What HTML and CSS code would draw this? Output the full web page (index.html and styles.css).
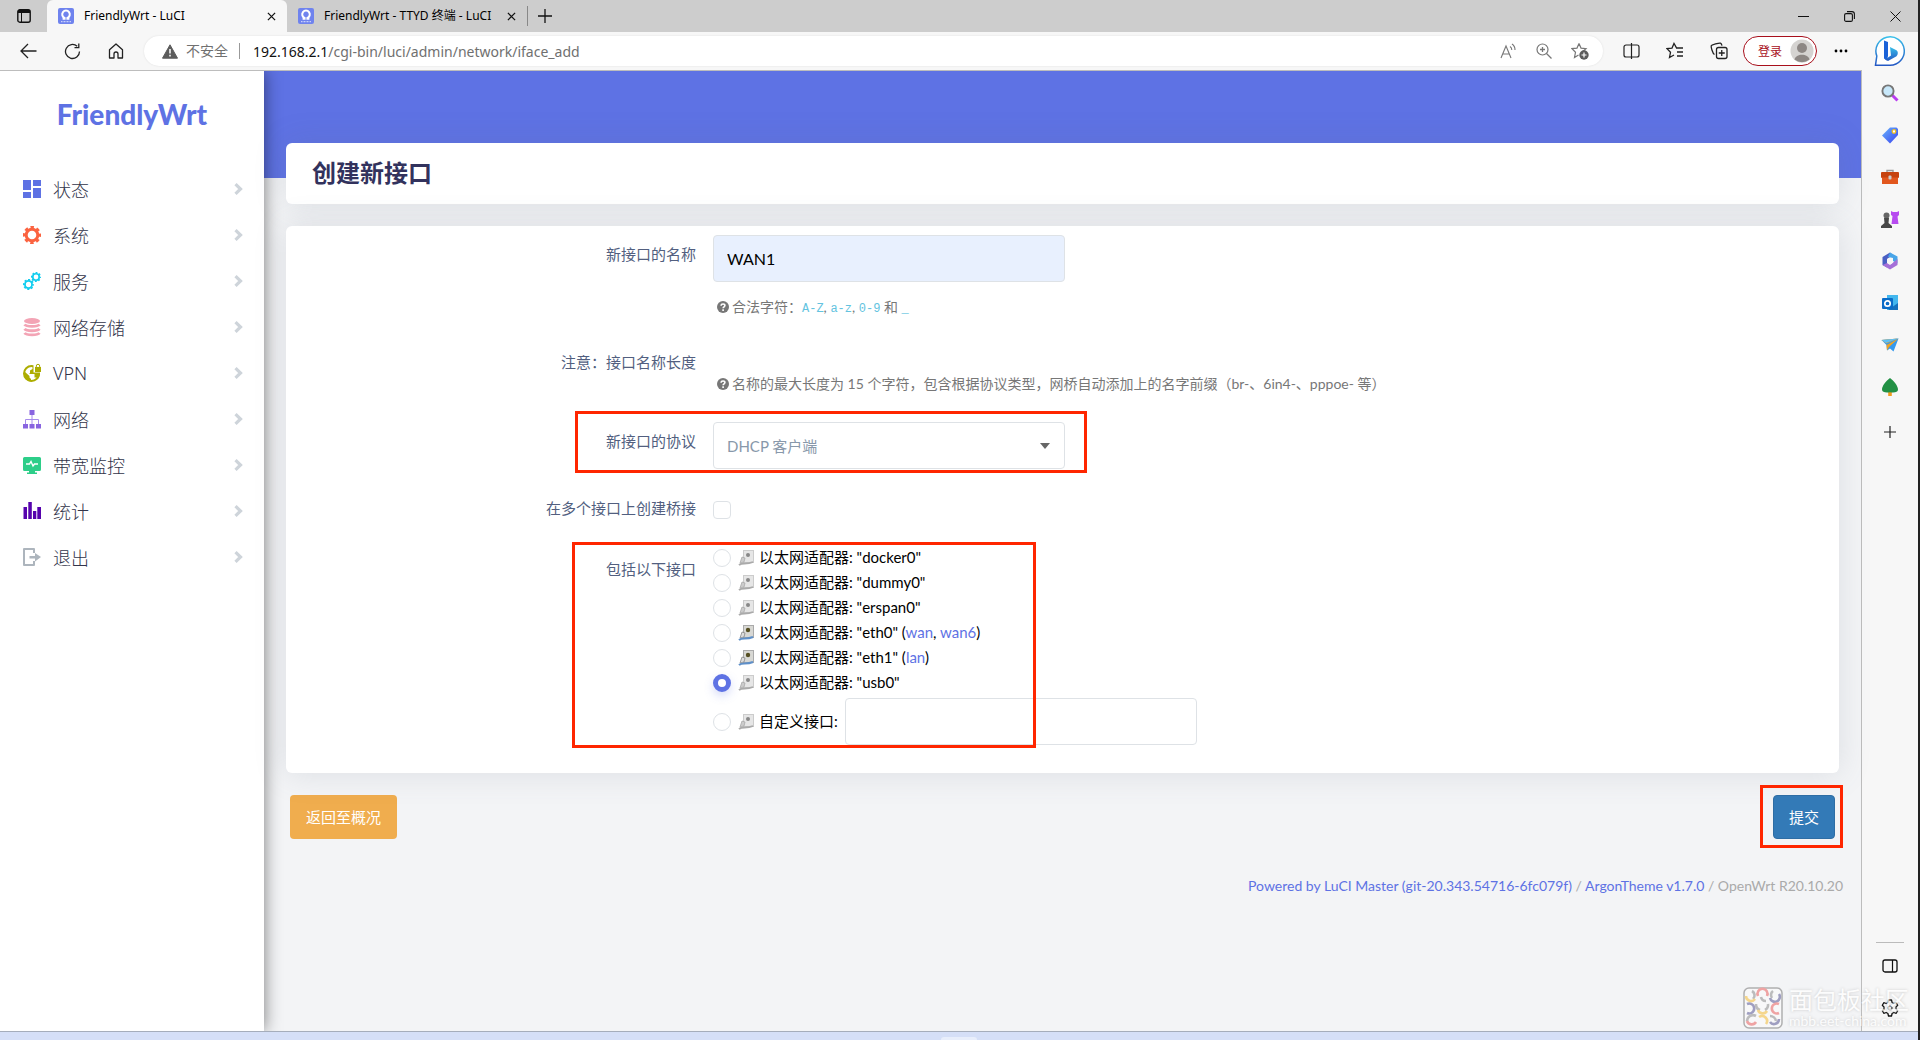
FILE: index.html
```html
<!DOCTYPE html>
<html lang="zh-CN">
<head>
<meta charset="utf-8">
<meta name="viewport" content="width=device-width, initial-scale=1">
<title>FriendlyWrt - LuCI</title>
<link rel="stylesheet" href="styles.css">
</head>
<body>
<svg class="defs" aria-hidden="true">
  <symbol id="fav" viewBox="0 0 16 16"><rect width="16" height="16" rx="2" fill="#6f83ee"/><path d="M4.600 10.800h2V9.900A3.800 3.800 0 1 1 9.400 9.900v.9h2" fill="none" stroke="#fff" stroke-width="2"/><path d="M3 13.600h10" stroke="#c9d0fa" stroke-width="1.400" stroke-dasharray="1 .5"/></symbol>
  <symbol id="x" viewBox="0 0 10 10"><path d="M1 1l8 8M9 1L1 9" stroke="#111" stroke-width="1.400"/></symbol>
  <symbol id="chev" viewBox="0 0 9 12"><path d="M1.500 1.200L6.500 6l-5 4.800" fill="none" stroke="#ced4da" stroke-width="3.200"/></symbol>
  <symbol id="gear" viewBox="0 0 18 18"><circle cx="9" cy="9" r="5.800" fill="none" stroke="currentColor" stroke-width="3"/><circle cx="9" cy="9" r="7.800" fill="none" stroke="currentColor" stroke-width="2.600" stroke-dasharray="3.400 2.720" stroke-dashoffset="1.700"/></symbol>
  <symbol id="help" viewBox="0 0 12 12"><circle cx="6" cy="6" r="6" fill="#777"/><path d="M4.100 4.700C4.200 2.400 7.900 2.500 7.900 4.600 7.900 5.900 6.100 5.900 6.100 7.300M6.100 8.300v1.600" fill="none" stroke="#fff" stroke-width="1.600"/></symbol>
  <symbol id="nic-off" viewBox="0 0 16 16"><rect x="5.500" y=".5" width="10" height="12" fill="#e6e6e6" stroke="#ccc"/><circle cx="10" cy="5" r="2" fill="#888"/><path d="M4 7l3 1-1 4-4 1z" fill="#ccc" stroke="#aaa" stroke-width=".8"/><path d="M1 15c3-3 7 0 14-3" fill="none" stroke="#aaa" stroke-width="1.800"/></symbol>
  <symbol id="nic-on" viewBox="0 0 16 16"><rect x="5.500" y=".5" width="10" height="12" fill="#d8d8d4" stroke="#aaa"/><circle cx="10" cy="5" r="2.200" fill="#554f22"/><path d="M4 7l3 1-1 4-4 1z" fill="#ddd" stroke="#888" stroke-width=".8"/><path d="M1 15c3-3 7 0 14-3" fill="none" stroke="#5e8fc8" stroke-width="2"/></symbol>
</svg>
<div class="window">
  <header class="tabstrip">
    <button class="tabmenu" aria-label="标签菜单"><svg width="14" height="14" viewBox="0 0 14 14"><rect x=".8" y=".8" width="12.400" height="12.400" rx="2" fill="none" stroke="#111" stroke-width="1.400"/><path d="M1 2.500h12" stroke="#111" stroke-width="3"/><path d="M4.500 4v9" stroke="#111"/></svg></button>
    <div class="tab tab-active"><svg width="16" height="16"><use href="#fav"/></svg><span class="tab-title">FriendlyWrt - LuCI</span><button aria-label="关闭"><svg width="9" height="9"><use href="#x"/></svg></button></div>
    <div class="tab"><svg width="16" height="16"><use href="#fav"/></svg><span class="tab-title">FriendlyWrt - TTYD 终端 - LuCI</span><button aria-label="关闭"><svg width="9" height="9"><use href="#x"/></svg></button></div>
    <button class="newtab" aria-label="新建标签"><svg width="14" height="14" viewBox="0 0 14 14"><path d="M7 0v14M0 7h14" stroke="#111" stroke-width="1.300"/></svg></button>
    <div class="winbtns">
      <button aria-label="最小化"><svg width="11" height="11" viewBox="0 0 11 11"><path d="M0 5.500h11" stroke="#111"/></svg></button>
      <button aria-label="还原"><svg width="11" height="11" viewBox="0 0 11 11"><rect x=".6" y="2.600" width="7.800" height="7.800" rx="1.500" fill="none" stroke="#111" stroke-width="1.100"/><path d="M3 .6h5a2.400 2.400 0 0 1 2.400 2.400v5" fill="none" stroke="#111" stroke-width="1.100"/></svg></button>
      <button aria-label="关闭"><svg width="11" height="11" viewBox="0 0 11 11"><path d="M.5.5l10 10M10.500.5l-10 10" stroke="#111"/></svg></button>
    </div>
  </header>

  <div class="frame">
    <div class="left">
      <div class="toolbar">
        <div class="nav">
          <button aria-label="返回"><svg width="17" height="16" viewBox="0 0 17 16"><path d="M16.500 8H1M8 1L1 8l7 7" fill="none" stroke="#222" stroke-width="1.300"/></svg></button>
          <button aria-label="刷新"><svg width="17" height="17" viewBox="0 0 17 17"><path d="M15.500 8.500a7 7 0 1 1-2.300-5.200M10.500 4.700h4.300V.5" fill="none" stroke="#222" stroke-width="1.300"/></svg></button>
          <button aria-label="主页"><svg width="16" height="16" viewBox="0 0 16 16"><path d="M1.500 6.800L8 1l6.500 5.800V15H10v-4a2 2 0 0 0-4 0v4H1.500z" fill="none" stroke="#222" stroke-width="1.300" stroke-linejoin="round"/></svg></button>
        </div>
        <div class="address">
          <svg width="16" height="15" viewBox="0 0 16 15"><path d="M8 .8L15.500 14.200H.5z" fill="#5c5c5c" stroke="#5c5c5c" stroke-linejoin="round"/><path d="M8 5v4.500M8 10.800v1.700" stroke="#fff" stroke-width="1.500"/></svg>
          <span class="insecure">不安全</span>
          <span class="url"><b>192.168.2.1</b>/cgi-bin/luci/admin/network/iface_add</span>
          <div class="addr-icons">
            <button aria-label="朗读"><svg width="16" height="16" viewBox="0 0 16 16"><path d="M1 15L6 3l5 12M3 11h6M10 3.500a4 4 0 0 1 1.800 3.500M12 1a7 7 0 0 1 3 6" fill="none" stroke="#777" stroke-width="1.100"/></svg></button>
            <button aria-label="缩放"><svg width="16" height="16" viewBox="0 0 16 16"><circle cx="6.500" cy="6.500" r="5.500" fill="none" stroke="#777" stroke-width="1.200"/><path d="M10.500 10.500l5 5M4 6.500h5M6.500 4v5" stroke="#777" stroke-width="1.300"/></svg></button>
            <button aria-label="收藏"><svg width="18" height="18" viewBox="0 0 18 18"><path d="M8 1.500l2 4.600 5 .5-3.800 3.400M7.500 13L3.500 15.500l1-5.200L1 6.600l5-.5L8 1.500" fill="none" stroke="#777" stroke-width="1.200"/><circle cx="13" cy="13" r="4.700" fill="#5c5c5c"/><path d="M13 10.500v5M10.500 13h5" stroke="#fff" stroke-width="1.200"/></svg></button>
          </div>
        </div>
        <div class="actions">
          <button aria-label="分屏"><svg width="17" height="16" viewBox="0 0 17 16"><path d="M6.500 2H3a2 2 0 0 0-2 2v8a2 2 0 0 0 2 2h3.500M10.500 2H14a2 2 0 0 1 2 2v8a2 2 0 0 1-2 2h-3.500M6.500 2h4M6.500 14h4M8.500 0v16" fill="none" stroke="#222" stroke-width="1.200"/></svg></button>
          <button aria-label="收藏夹"><svg width="18" height="18" viewBox="0 0 18 18"><path d="M10.500 5.800L8 1.500 6 6.100 1 6.600l3.500 3.700-1 5.200L8 13M10 6h7M11 10h6M11 14h6" fill="none" stroke="#222" stroke-width="1.300"/></svg></button>
          <button aria-label="集锦"><svg width="18" height="18" viewBox="0 0 18 18"><rect x="6.500" y="5.500" width="10.500" height="11" rx="2" fill="none" stroke="#222" stroke-width="1.300"/><path d="M4.500 12.500C2.500 11.500 1 5 1.200 4c.2-1.200 8.300-3.300 9.300-2.800.8.3 1.200 1.300 1.500 2.500M11.750 8v6M8.750 11h6" fill="none" stroke="#222" stroke-width="1.300"/></svg></button>
        </div>
        <button class="login">登录<svg width="24" height="24" viewBox="0 0 24 24"><circle cx="12" cy="12" r="11.500" fill="#d5d3d1"/><circle cx="12" cy="9" r="5" fill="#8d8784"/><path d="M4.500 20.500c1-6.500 14-6.500 15 0a12 12 0 0 1-15 0" fill="#8d8784"/></svg></button>
        <button class="more" aria-label="更多"><svg width="14" height="4" viewBox="0 0 14 4"><circle cx="2" cy="2" r="1.400"/><circle cx="7" cy="2" r="1.400"/><circle cx="12" cy="2" r="1.400"/></svg></button>
      </div>

      <div class="page">
        <aside class="sidebar">
          <a class="logo" href="#">FriendlyWrt</a>
          <nav class="menu">
            <a href="#"><svg class="ico" viewBox="0 0 18 18" fill="#5e72e4"><path d="M0 0h8v10H0zM0 12h8v6H0zM10 0h8v6h-8zM10 8h8v10h-8z"/></svg><span>状态</span><svg class="chev"><use href="#chev"/></svg></a>
            <a href="#"><svg class="ico" color="#fb6340"><use href="#gear"/></svg><span>系统</span><svg class="chev"><use href="#chev"/></svg></a>
            <a href="#"><svg class="ico" viewBox="0 0 18 18" color="#11cdef"><use href="#gear" x="0" y="7" width="11" height="11"/><use href="#gear" x="8" y="0" width="10" height="10"/></svg><span>服务</span><svg class="chev"><use href="#chev"/></svg></a>
            <a href="#"><svg class="ico" viewBox="0 0 18 18"><ellipse cx="9" cy="3" rx="8" ry="3" fill="#f3a4b5"/><path d="M1.500 6.500c2 2.600 13 2.600 15 0M1.500 10.800c2 2.600 13 2.600 15 0M1.500 15c2 2.600 13 2.600 15 0" fill="none" stroke="#f3a4b5" stroke-width="2.800"/></svg><span>网络存储</span><svg class="chev"><use href="#chev"/></svg></a>
            <a href="#"><svg class="ico" viewBox="0 0 18 18"><circle cx="8.500" cy="9.500" r="7.500" fill="none" stroke="#adad00" stroke-width="2"/><path d="M1.500 7.500l5 4.500v1.500L8 15v2.500C3 17.500.5 12 1.500 7.500zM6 10h5.500v3.500h2L15 15l2-4V8h-5V1.500L9.500 2v3L7 6.500V9z" fill="#adad00"/><path d="M10.500 0H18v8.500h-7.500z" fill="#fff"/><rect x="12" y="3" width="6" height="5" fill="#adad00"/><path d="M13.300 3V2a1.700 1.700 0 0 1 3.400 0v1" fill="none" stroke="#adad00"/></svg><span>VPN</span><svg class="chev"><use href="#chev"/></svg></a>
            <a href="#"><svg class="ico" viewBox="0 0 18 18" fill="#8965e0"><path d="M6.500 0h5v5h-5zM0 14h5v4.500H0zM6.500 14h5v4.500h-5zM13 14h5v4.500h-5z"/><path d="M9 5v9M2.500 14V9.500h13V14" fill="none" stroke="#a78cec"/></svg><span>网络</span><svg class="chev"><use href="#chev"/></svg></a>
            <a href="#"><svg class="ico" viewBox="0 0 18 18"><path d="M1.500 1h15A1.500 1.500 0 0 1 18 2.500v11a1.500 1.500 0 0 1-1.500 1.500H12v1.500h2V18H4v-1.500h2V15H1.500A1.500 1.500 0 0 1 0 13.500v-11A1.500 1.500 0 0 1 1.500 1z" fill="#2dce89"/><path d="M3 8h3.500L8 5.500 10 10l1.500-2H15" fill="none" stroke="#fff" stroke-width="1.400"/></svg><span>带宽监控</span><svg class="chev"><use href="#chev"/></svg></a>
            <a href="#"><svg class="ico" viewBox="0 0 18 18" fill="#5603ad"><path d="M.5 5H4v12H.5zM5.300 0h3.500v17H5.300zM10 9h3.300v8H10zM14.300 5H18v12h-3.700z"/></svg><span>统计</span><svg class="chev"><use href="#chev"/></svg></a>
            <a href="#"><svg class="ico" viewBox="0 0 18 18"><path d="M11 5V1H1v16h10v-4" fill="none" stroke="#adb5bd" stroke-width="2" stroke-linejoin="round"/><path d="M6.500 8H12V5l6 4-6 4.500V10.500H6.500z" fill="#adb5bd"/></svg><span>退出</span><svg class="chev"><use href="#chev"/></svg></a>
          </nav>
        </aside>

        <main class="main">
          <div class="banner"></div>
          <h1 class="card title">创建新接口</h1>
          <form class="card form" id="iface">
            <div class="row">
              <label for="name">新接口的名称</label>
              <div>
                <input class="text name" id="name" type="text" value="WAN1">
                <p class="help"><svg width="12" height="12"><use href="#help"/></svg><span>合法字符：<code>A-Z</code>, <code>a-z</code>, <code>0-9</code> 和 <code>_</code></span></p>
              </div>
            </div>
            <div class="row row-note">
              <span class="label">注意：接口名称长度</span>
              <p class="help"><svg width="12" height="12"><use href="#help"/></svg><span>名称的最大长度为 15 个字符，包含根据协议类型，网桥自动添加上的名字前缀（br-、6in4-、pppoe- 等）</span></p>
            </div>
            <div class="row row-proto">
              <label for="proto">新接口的协议</label>
              <div class="select"><select id="proto"><option>DHCP 客户端</option></select><svg width="10" height="6" viewBox="0 0 10 6"><path d="M0 0h10L5 6z" fill="#666"/></svg></div>
              <i class="mark mark-proto"></i>
            </div>
            <div class="row row-check">
              <label for="bridge">在多个接口上创建桥接</label>
              <input class="tick" id="bridge" type="checkbox">
            </div>
            <div class="row row-ifs">
              <span class="label" id="ifs">包括以下接口</span>
              <div role="radiogroup" aria-labelledby="ifs">
                <div class="opt"><input id="r1" name="if" type="radio"><svg width="16" height="16"><use href="#nic-off"/></svg><label for="r1">以太网适配器: "docker0"</label></div>
                <div class="opt"><input id="r2" name="if" type="radio"><svg width="16" height="16"><use href="#nic-off"/></svg><label for="r2">以太网适配器: "dummy0"</label></div>
                <div class="opt"><input id="r3" name="if" type="radio"><svg width="16" height="16"><use href="#nic-off"/></svg><label for="r3">以太网适配器: "erspan0"</label></div>
                <div class="opt"><input id="r4" name="if" type="radio"><svg width="16" height="16"><use href="#nic-on"/></svg><label for="r4">以太网适配器: "eth0" (<a href="#">wan</a>, <a href="#">wan6</a>)</label></div>
                <div class="opt"><input id="r5" name="if" type="radio"><svg width="16" height="16"><use href="#nic-on"/></svg><label for="r5">以太网适配器: "eth1" (<a href="#">lan</a>)</label></div>
                <div class="opt"><input id="r6" name="if" type="radio" checked><svg width="16" height="16"><use href="#nic-off"/></svg><label for="r6">以太网适配器: "usb0"</label></div>
                <div class="opt opt-custom"><input id="r7" name="if" type="radio"><svg width="16" height="16"><use href="#nic-off"/></svg><label for="r7">自定义接口:</label><input class="text" type="text" aria-label="自定义接口"></div>
              </div>
              <i class="mark mark-ifs"></i>
            </div>
          </form>
          <div class="buttons">
            <button class="btn btn-back" type="button">返回至概况</button>
            <span class="submit"><button class="btn btn-save" type="submit" form="iface">提交</button><i class="mark mark-save"></i></span>
          </div>
          <footer class="footer"><a href="#">Powered by LuCI Master (git-20.343.54716-6fc079f)</a> / <a href="#">ArgonTheme v1.7.0</a> / OpenWrt R20.10.20</footer>
        </main>
      </div>
    </div>

    <aside class="rail">
      <button class="bing" aria-label="必应"><svg width="32" height="32" viewBox="0 0 32 32"><defs><linearGradient id="bg1" x1="0" y1="0" x2="0" y2="1"><stop offset="0" stop-color="#38c0ea"/><stop offset="1" stop-color="#2458c4"/></linearGradient></defs><path d="M1.500 30.200L2.800 21A14.200 14.200 0 1 1 16 30.200z" fill="#fff" stroke="url(#bg1)" stroke-width="1.500"/><path d="M10 5.500l4 1.500v14l-1 4.500-3-2z" fill="#1b62d8"/><path d="M16 12l6.500 3.200c2 1.500 1.500 4.500 0 6L14 26l-3-1.500 6-4z" fill="url(#bg1)"/></svg></button>
      <div class="rail-list">
        <button aria-label="搜索"><svg viewBox="0 0 18 18"><path d="M11 11l5.500 5.500" stroke="#b93df0" stroke-width="3"/><circle cx="7" cy="7" r="5.600" fill="#c8e8fa" stroke="#777" stroke-width="1.900"/></svg></button>
        <button aria-label="购物"><svg viewBox="0 0 18 18"><defs><linearGradient id="tg" x1="0" y1="0" x2="1" y2="1"><stop offset="0" stop-color="#67b4fa"/><stop offset="1" stop-color="#3a43f0"/></linearGradient></defs><path d="M9 1.500h6.500L17 3v6l-8 8.500L1 9.500z" fill="url(#tg)"/><circle cx="13" cy="5.500" r="1.800" fill="#fff" stroke="#f3bd1d" stroke-width="1.300"/></svg></button>
        <button aria-label="工具"><svg viewBox="0 0 18 18"><path d="M6 5V2.500h6V5" fill="none" stroke="#999" stroke-width="1.400"/><rect y="4" width="18" height="6" rx="1" fill="#c6420e"/><path d="M1 9.500h16V16H1z" fill="#e2571e"/><rect x="7.500" y="7.500" width="3" height="4" rx="1" fill="#ccc"/></svg></button>
        <button aria-label="游戏"><svg viewBox="0 0 18 18"><path d="M10 1l2 1h4l2-1v4l-1.500 1.500L17.500 14h-7L11.500 6 10 5z" fill="#b74bf0"/><circle cx="5.500" cy="5.500" r="3" fill="#666"/><path d="M3 8h5l-.500 5L11 16v2H0v-2l3.500-3z" fill="#484848"/></svg></button>
        <button aria-label="Microsoft 365"><svg viewBox="0 0 18 18"><path d="M9 .5L1.500 5v8L6 15.500V7L12 3z" fill="#4a5fc4"/><path d="M9 .5l7.500 4v7L12 9V6L7 5z" fill="#49a5e8"/><path d="M16.500 7v6L9 17.500 1.500 13 6 11l3 2z" fill="#a56fd8"/><circle cx="9" cy="9" r="3" fill="#f7f7f7"/></svg></button>
        <button aria-label="Outlook"><svg viewBox="0 0 18 18"><path d="M6 1h11v15H6z" fill="#43b7ee"/><path d="M7 16l10-7v7z" fill="#1471bd"/><rect x="1" y="4" width="11" height="11" rx="1" fill="#0a6cc8"/><circle cx="6.500" cy="9.500" r="2.700" fill="none" stroke="#fff" stroke-width="1.700"/></svg></button>
        <button aria-label="Drop"><svg viewBox="0 0 18 18"><path d="M.5 4L17.500 2.500 12.500 15.500 9 12.500 6 14.500 5.500 9z" fill="#3599ee"/><path d="M5.500 9l12-6.500L8 11l-2 3.500zM.5 4l5 3.500 11-5z" fill="#efa223"/><path d="M.5 4l17-1.500L5 7z" fill="#5cc0f8"/></svg></button>
        <button aria-label="Tree"><svg viewBox="0 0 18 18"><path d="M7.200 13h3.600v5H7.200z" fill="#f09a1f"/><path d="M9 0c4 3 8 8 8 11.500 0 3-4 3.300-8 2.700-4 .6-8 .3-8-2.700C1 8 5 3 9 0z" fill="#229044"/></svg></button>
        <button class="add" aria-label="添加"><svg viewBox="0 0 18 18"><path d="M9 3v12M3 9h12" stroke="#222" stroke-width="1.200"/></svg></button>
        <hr>
        <button aria-label="侧栏"><svg viewBox="0 0 18 18"><rect x="2" y="3" width="14" height="12" rx="2" fill="none" stroke="#111" stroke-width="1.300"/><path d="M11.500 3v12" stroke="#111" stroke-width="1.200"/></svg></button>
        <button aria-label="设置"><svg viewBox="0 0 18 18"><path d="M7.500 1h3l.6 2.500 1.700 1 2.400-.8 1.500 2.600L15 8v2l1.700 1.700-1.500 2.600-2.400-.8-1.700 1-.6 2.500h-3l-.6-2.500-1.700-1-2.400.8-1.500-2.600L3 10V8L1.300 6.300l1.500-2.600 2.400.8 1.700-1z" fill="none" stroke="#111" stroke-width="1.300" stroke-linejoin="round"/><circle cx="9" cy="9" r="2" fill="none" stroke="#111" stroke-width="1.200"/></svg></button>
      </div>
    </aside>
    <div class="watermark">
      <svg width="40" height="42" viewBox="0 0 40 42"><rect x="1" y="1" width="38" height="40" rx="5" fill="#fafafa" stroke="#999" stroke-width="1.500"/><g fill="none" stroke-width="2.600"><path d="M9 4a5 5 0 0 1 1 8M18 10a5 5 0 0 0 5 4" stroke="#aaa"/><path d="M15 9a5 5 0 1 1 9 0" stroke="#e88"/><path d="M3 9a5 5 0 0 0 9 3" stroke="#f6cd6a"/><path d="M30 4a5 5 0 0 0-1 7" stroke="#aaa"/><path d="M36 7a5 5 0 1 1-9 4" stroke="#8382b0"/><path d="M4 17a5 5 0 1 1 0 9" stroke="#8382b0"/><path d="M13 17a6 6 0 0 0 4 6M25 17a6 6 0 0 1-3 6" stroke="#aaa"/><path d="M15 23a5 5 0 0 0 9 1" stroke="#f6cd6a"/><path d="M36 17a5 5 0 1 0 0 9" stroke="#e88"/><path d="M4 34a6 6 0 0 1 9-5M27 29a6 6 0 0 1 6 5" stroke="#aaa"/><path d="M4 34a5 5 0 0 0 9 1" stroke="#e88"/><path d="M16 30a5 5 0 0 1 7 7" stroke="#f6cd6a"/><path d="M27 35a5 5 0 0 0 9-3" stroke="#8382b0"/></g></svg>
      <div><strong>面包板社区</strong><span>mbb.eet-china.com</span></div>
    </div>
  </div>
  <div class="taskbar"><i></i></div>
</div>
</body>
</html>
```
FILE: styles.css
```css
* { box-sizing: border-box; }
body { margin: 0; font-family: Lato, "Noto Sans CJK SC", sans-serif; font-size: 15px; color: #000; background: #f7f7f7; }
button { border: 0; padding: 0; background: none; font: inherit; color: inherit; display: flex; align-items: center; justify-content: center; }
a { color: #5e72e4; text-decoration: none; }
p, h1 { margin: 0; }
svg { flex: none; display: block; }
.defs { position: absolute; width: 0; height: 0; }

.window { min-height: 100vh; display: flex; flex-direction: column; border-right: 2px solid #222; }

/* Tab strip */
.tabstrip { height: 32px; display: flex; background: #cdcdcd; font-family: "Noto Sans", "Noto Sans CJK SC", sans-serif; font-size: 12px; }
.tabmenu { width: 47px; }
.tab { width: 240px; display: flex; align-items: center; gap: 10px; padding: 0 10px 0 11px; }
.tab-title { flex: 1; white-space: nowrap; line-height: 16px; padding-bottom: 1px; }
.tab button { width: 12px; height: 20px; }
.tab-active { background: #f7f7f7; border-radius: 6px 6px 0 0; }
.newtab { width: 34px; margin: 6px 0; border-left: 1px solid #888; }
.winbtns { margin-left: auto; display: flex; }
.winbtns button { width: 46px; }

/* Toolbar */
.frame { flex: 1; display: flex; position: relative; }
.left { flex: 1; min-width: 0; display: flex; flex-direction: column; }
.toolbar { height: 39px; display: flex; align-items: center; background: #f7f7f7; border-bottom: 1px solid #bdbdbd; font-family: "Noto Sans", "Noto Sans CJK SC", sans-serif; }
.nav { display: flex; padding: 0 6px; }
.nav button, .actions button { width: 44px; height: 30px; }
.address { flex: 1; height: 30px; border-radius: 15px; background: #fff; display: flex; align-items: center; padding: 0 5px 0 18px; font-size: 14px; color: #707070; box-shadow: 0 0 2px #ddd; }
.insecure { padding: 0 11px 0 8px; border-right: 1px solid #999; line-height: 16px; }
.url { padding-left: 13px; }
.url b { font-weight: 400; color: #111; }
.addr-icons { display: flex; margin-left: auto; }
.addr-icons button { width: 36px; height: 30px; }
.actions { display: flex; padding-left: 6px; }
.login { width: 74px; height: 30px; border: 1px solid #a80f1c; border-radius: 15px; color: #a80f1c; font-size: 12px; justify-content: space-between; padding: 0 2px 0 14px; margin-left: 2px; background: #fff; }
.more { width: 44px; height: 30px; padding-left: 3px; }

/* Router page */
.page { flex: 1; display: flex; background: #f3f4f6; }
.sidebar { width: 264px; flex: none; background: #fff; box-shadow: 0 0 16px rgba(0, 0, 0, .5); clip-path: inset(0 -20px 0 0); }
.logo { display: block; padding-top: 25px; height: 95px; text-align: center; font-weight: 900; font-size: 28px; line-height: 36px; }
.menu a { display: flex; align-items: center; height: 46px; padding: 0 21px 0 23px; gap: 12px; font-size: 18px; font-weight: 300; font-family: "Noto Sans", "Noto Sans CJK SC", sans-serif; }
.menu span { flex: 1; color: #32344a; }
.ico { width: 18px; height: 18px; overflow: visible; }
.chev { width: 9px; height: 12px; }

.main { flex: 1; min-width: 0; }
.banner { height: 107px; background: #5e72e4; }
.card { margin: 0 22px 22px; background: #fff; border-radius: 6px; box-shadow: 0 0 32px rgba(100, 110, 130, .17); }
.title { position: relative; margin-top: -35px; height: 61px; line-height: 60px; padding-left: 26px; font-size: 24px; font-weight: 700; color: #32325d; }
.form { position: relative; padding: 9px 0 2px; }
.row { position: relative; display: grid; grid-template-columns: minmax(160px, 410px) 1fr; column-gap: 17px; padding-bottom: 26px; align-items: start; }
.row > label, .label { text-align: right; padding-top: 9px; line-height: 20px; color: #525f7f; }
.row-note .help { margin-top: 31px; }
.row-note { padding-bottom: 28px; }
.row-proto { padding-bottom: 20px; }
.row-ifs .label { padding-top: 14px; }
.text, .select select { display: block; width: 352px; height: 47px; border: 1px solid #dee2e6; border-radius: 4px; padding: 0 13px; font: inherit; font-size: 16px; background: #fff; color: #000; }
.name { background: #e8f0fe; }
.help { display: flex; align-items: center; gap: 3px; margin: 15px 0 0 4px; line-height: 20px; font-size: 14px; color: #777; }
.help code { font-family: "Liberation Mono", monospace; font-size: 12px; line-height: 12px; color: #63c3e0; }
.select { position: relative; width: 352px; }
.select select { appearance: none; color: #8898aa; font-size: 15px; }
.select svg { position: absolute; right: 15px; top: 21px; }
.tick, .opt input[type="radio"] { appearance: none; width: 18px; height: 18px; margin: 0; border: 1px solid #dee2e6; background: #fff; flex: none; }
.tick { margin-top: 12px; border-radius: 4px; }
.opt input[type="radio"] { border-radius: 50%; margin-right: 7px; }
.opt input[type="radio"]:checked { border: 5px solid #5e72e4; box-shadow: 0 4px 10px rgba(94, 114, 228, .25); }
.opt { display: flex; align-items: center; height: 25px; }
.opt label { padding-left: 5px; line-height: 20px; padding-bottom: 2px; white-space: nowrap; }
.opt-custom { height: 47px; margin-top: 3px; }
.opt-custom .text { margin-left: 7px; }

.buttons { display: flex; justify-content: space-between; margin: 0 26px; }
.btn { height: 44px; padding: 0 15px 2px; border-radius: 4px; color: #fff; }
.btn-back { padding: 0 16px 2px; background: #f0ad4e; }
.btn-save { background: #337ab7; border: 1px solid #2e6da4; }
.submit { position: relative; }
.footer { margin: 37px 18px 0; text-align: right; line-height: 20px; font-size: 14px; color: #aaa; }

/* Red annotation frames */
.mark { position: absolute; border: 3px solid #ff2600; pointer-events: none; }
.mark-proto { left: 289px; top: -11px; width: 512px; height: 62px; }
.mark-ifs { left: 286px; top: -3px; width: 464px; height: 206px; }
.mark-save { left: -13px; right: -8px; top: -10px; bottom: -9px; }

/* Edge sidebar */
.rail { width: 57px; flex: none; display: flex; flex-direction: column; background: #f7f7f7; }
.bing { height: 38px; }
.rail-list { flex: 1; display: flex; flex-direction: column; align-items: center; padding-top: 2px; border-left: 1px solid #bdbdbd; }
.rail-list button { width: 42px; height: 42px; }
.rail-list .add { height: 48px; }
.rail-list svg { width: 18px; height: 18px; }
.rail-list hr { width: 28px; margin: auto 0 2px; border: 0; border-top: 1px solid #bbb; }
.rail-list hr ~ button:last-child { margin-bottom: 2px; }

.watermark { position: absolute; right: 9px; bottom: 2px; display: flex; gap: 6px; pointer-events: none; opacity: .75; color: #fff; text-shadow: 0 0 3px #bbb; }
.watermark strong { display: block; font-size: 24px; line-height: 26px; font-weight: 400; }
.watermark span { display: block; font-size: 14px; line-height: 16px; }

.taskbar { height: 9px; border-top: 1px solid #a5adbb; background: #d5dff7; display: flex; align-items: end; justify-content: center; }
.taskbar i { width: 36px; height: 3px; border-radius: 3px 3px 0 0; background: #e8eefb; }
```
